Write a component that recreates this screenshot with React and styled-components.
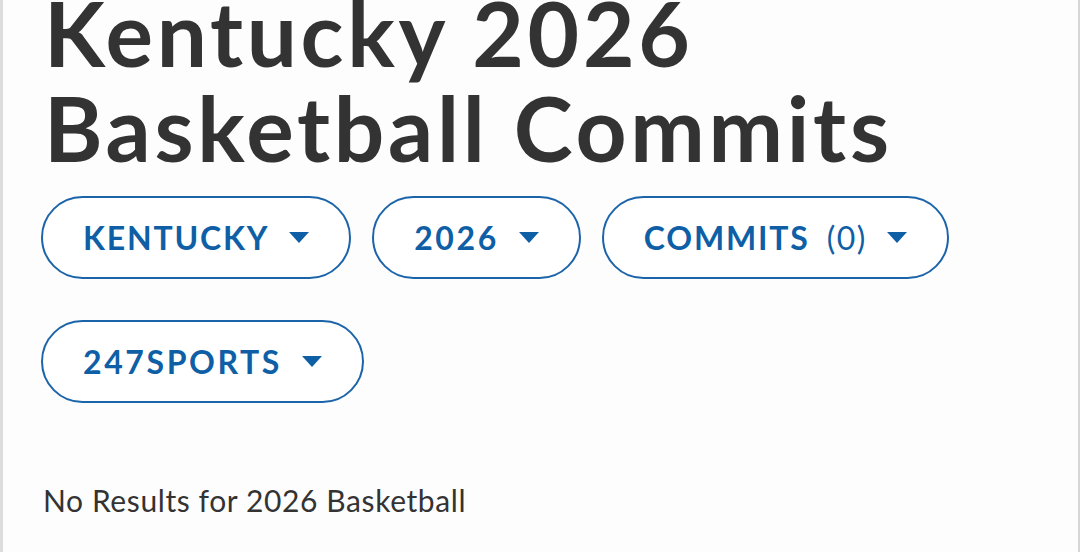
import React from "react";
import styled, { createGlobalStyle } from "styled-components";

const Global = createGlobalStyle`
  html, body { margin: 0; padding: 0; background: #ffffff; }
  body { font-family: "Lato", "Liberation Sans", sans-serif; }
`;

const Page = styled.div`
  box-sizing: border-box;
  width: 1080px;
  height: 552px;
  overflow: hidden;
  border-left: 3px solid #dcdcdc;
  border-right: 2px solid #d6d6d6;
  background: #fdfdfd;
  padding: 0 0 0 38px;
`;

const Title = styled.h1`
  margin: -15px 0 0 3px;
  font-family: "Lato", sans-serif;
  font-weight: 700;
  font-size: 89px;
  line-height: 95px;
  color: #333333;
  letter-spacing: 3.7px;
  white-space: nowrap;
`;

const Filters = styled.div`
  display: flex;
  flex-wrap: wrap;
  column-gap: 21px;
  row-gap: 41px;
  margin-top: 21px;
  width: 960px;
`;

const Pill = styled.button`
  box-sizing: border-box;
  height: 83px;
  display: inline-flex;
  align-items: center;
  gap: 20px;
  padding: 0 40px 0 40px;
  border: 2px solid #1c64aa;
  border-radius: 42px;
  background: #ffffff;
  color: #0f5fa6;
  font-family: "Lato", sans-serif;
  font-weight: 700;
  font-size: 32px;
  letter-spacing: 1.8px;
  cursor: pointer;
`;

const Label = styled.span`
  display: inline-flex;
  align-items: baseline;
  letter-spacing: ${(p) => (p.$numeric ? "2.6px" : "1.8px")};
`;

const Count = styled.span`
  display: inline-block;
  font-weight: 400;
  margin-left: 17px;
  letter-spacing: 1.5px;
`;

const Caret = () => (
  <svg width="20" height="11" viewBox="0 0 20 11">
    <polygon points="0,0 20,0 10,11" fill="#0f5fa6" />
  </svg>
);

const Empty = styled.p`
  margin: 79px 0 0 2px;
  font-family: "Lato", sans-serif;
  font-size: 30px;
  letter-spacing: 0.6px;
  color: #333333;
`;

export default function App() {
  return (
    <>
      <Global />
      <Page>
        <Title>
          Kentucky 2026
          <br />
          Basketball Commits
        </Title>
        <Filters>
          <Pill><Label>KENTUCKY</Label><Caret /></Pill>
          <Pill><Label $numeric>2026</Label><Caret /></Pill>
          <Pill><Label>COMMITS<Count>(0)</Count></Label><Caret /></Pill>
          <Pill><Label $numeric>247SPORTS</Label><Caret /></Pill>
        </Filters>
        <Empty>No Results for 2026 Basketball</Empty>
      </Page>
    </>
  );
}
